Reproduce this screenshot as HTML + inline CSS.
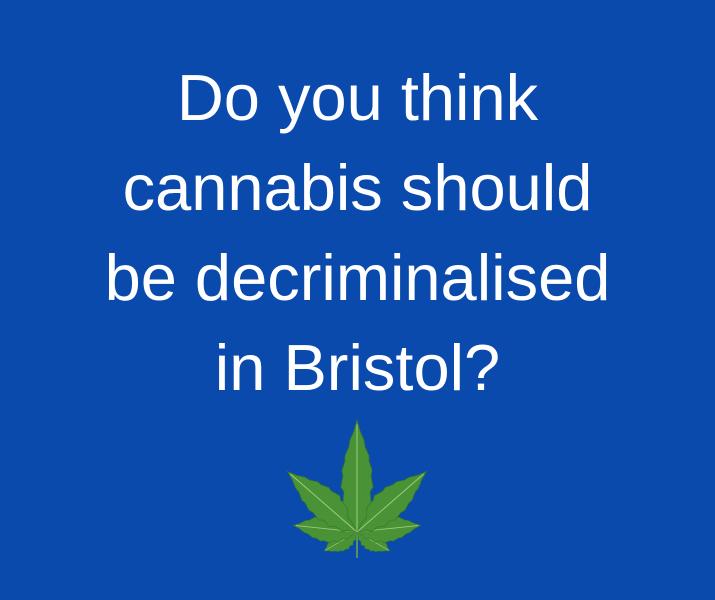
<!DOCTYPE html>
<html><head><style>
html,body{margin:0;padding:0}
body{width:715px;height:600px;background:#0a4aad;position:relative;overflow:hidden;font-family:"Liberation Sans",sans-serif;color:#fff}
.l{position:absolute;left:0;width:715px;text-align:center;font-size:65px;line-height:65px;white-space:nowrap}
</style></head><body>
<div class="l" style="top:65px">Do you think</div>
<div class="l" style="top:155px">cannabis should</div>
<div class="l" style="top:245px">be decriminalised</div>
<div class="l" style="top:335px">in Bristol?</div>
<svg width="715" height="600" style="position:absolute;left:0;top:0">
<defs>
<g id="lf"><path d="M0,0 L-6,-10 L-9,-12 L-10,-22 L-14,-26 L-13,-36 L-16,-40 L-14,-50 L-15,-55 L-12,-63 L-12,-68 L-8,-76 L-7,-82 L-3,-90 L0,-100 L3,-90 L7,-82 L8,-76 L12,-68 L12,-63 L15,-55 L14,-50 L16,-40 L13,-36 L14,-26 L10,-22 L9,-12 L6,-10 Z" fill="#4a9236" stroke="#3a7a2a" stroke-width="0.8"/><path d="M0,0 L0,-96" stroke="#9ccd7c" stroke-width="1"/></g>
</defs>
<g transform="translate(357,532)">
<line x1="0" y1="0" x2="0" y2="26" stroke="#6aa84f" stroke-width="1.5"/>
<g transform="rotate(-120) scale(0.65,0.38)"><use href="#lf"/></g>
<g transform="rotate(120) scale(0.65,0.38)"><use href="#lf"/></g>
<g transform="rotate(-84) scale(0.85,0.64)"><use href="#lf"/></g>
<g transform="rotate(84) scale(0.85,0.64)"><use href="#lf"/></g>
<g transform="rotate(-49) scale(1,0.92)"><use href="#lf"/></g>
<g transform="rotate(49) scale(1,0.92)"><use href="#lf"/></g>
<g transform="rotate(0) scale(1,1.12)"><use href="#lf"/></g>
</g>
</svg>
</body></html>
